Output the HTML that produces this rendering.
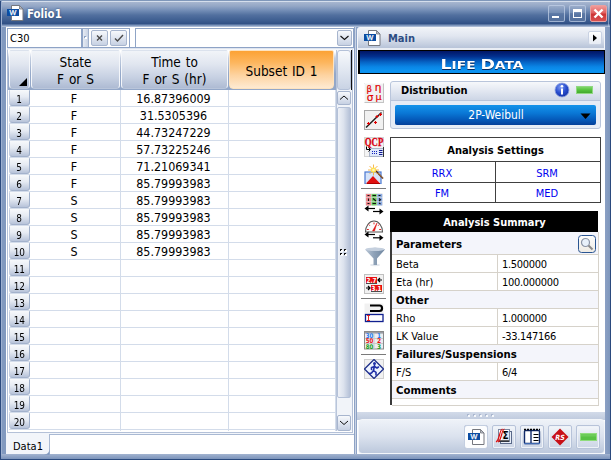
<!DOCTYPE html><html><head><meta charset="utf-8"><title>Folio1</title><style>
*{box-sizing:border-box;margin:0;padding:0}
html,body{width:611px;height:460px;overflow:hidden}
body{position:relative;background:#4b699a;font-family:"DejaVu Sans Condensed","Liberation Sans",sans-serif;font-size:11px;color:#000}
.abs{position:absolute}
#frame{left:0;top:0;width:611px;height:460px;background:#8199bf;}
#frameL{left:0;top:0;width:2px;height:460px;background:linear-gradient(90deg,#2b4a7e 0,#2b4a7e 1px,#9db0d0 1px,#9db0d0 2px)}
#frameR{left:605px;top:0;width:6px;height:460px;background:linear-gradient(90deg,#8ba0c4 0,#7f97bc 4.600px,#2b4a7e 4.800px,#2b4a7e 6px)}
#frameB{left:1px;top:454px;width:609px;height:6px;background:linear-gradient(#a3b4d0 0,#7e96bc 4.600px,#2b4a7e 4.800px,#2b4a7e 6px)}
#title{left:0;top:0;width:611px;height:27px;background:linear-gradient(#7f97ba 0,#7f97ba 1px,#d5deec 1px,#d5deec 2px,#a7b6d0 2px,#94a7c6 6px,#7690b8 10px,#52709f 15px,#3f5f92 20px,#2f4f84 24px,#2f4f84 24.300px,#7f97bd 24.700px,#7f97bd 25.700px,#a9b9d4 26.200px,#a9b9d4 27px)}
#ttext{left:27px;top:7px;font-weight:bold;font-size:11.400px;line-height:14px;color:#fff;letter-spacing:0;text-shadow:0 0 2px #274472}
.wbtn{top:5px;width:17px;height:17px;border:1px solid rgba(190,204,228,0.750);border-radius:2px;background:linear-gradient(rgba(255,255,255,0.060),rgba(255,255,255,0.120) 45%,rgba(255,255,255,0.020) 50%,rgba(255,255,255,0.140))}
#lpane{left:6px;top:27px;width:350px;height:427px;background:#fff}
#rpane{left:357px;top:27px;width:248px;height:427px;background:#fff}
.inp{background:#fff;border:1px solid #8fa4c6}
.hdr{top:50px;height:39px;border:1px solid #f4f6fa;border-top-color:#dbe2ed;border-bottom-color:#b9c5da;border-radius:2px 2px 4px 4px;background:linear-gradient(#f1f4f8 0,#e1e6f0 35%,#c6d0e2 72%,#aebbd3 100%);text-align:center;font-size:13.500px;word-spacing:1px;line-height:17.300px;padding-top:2px}
.rh{left:9px;width:21px;height:16px;border-right:1px solid #9eafca;border-bottom:1px solid #a3b2cc;border-left:1px solid #c3cde0;border-radius:1px 1px 3px 3px;background:linear-gradient(#f7f9fb 0,#e6ebf3 45%,#b7c3d9 100%);text-align:center;font-size:11px;line-height:13px;padding-top:3px}
.rh span{display:inline-block;transform:scaleX(0.900)}
.c{height:17px;font-size:12.400px;line-height:16px;text-align:center;padding-top:1px}
.hl{height:1px;background:#d3dcea;left:9px;width:326px}
.vl{width:1px;background:#d3dcea;top:90px;height:341px}
.sbtn{border:1px solid #a7b5ce;border-radius:2px;background:linear-gradient(#f7f9fc,#dfe5f0 50%,#c7d1e3)}
.ib{left:8px;width:20px;height:20px}
.b{font-weight:bold}
.srow{left:35px;width:206px;height:18px;border-bottom:1px solid #d6d2ca;font-size:11px;line-height:17px}
.sh{background:#f4f5fb;font-weight:bold;font-size:11px}
.bb{top:398px;width:24px;height:24px;border:1px solid #b7c3d9;border-radius:2px;background:linear-gradient(#f3f6fa,#dde4ef 50%,#ccd5e5);box-shadow:inset 0 0 0 1px #eef2f8}
</style></head><body>
<div id="frame" class="abs"></div><div id="title" class="abs"></div><div id="frameL" class="abs" style="top:1px;height:459px"></div><div id="frameR" class="abs" style="top:27px;height:433px"></div><div class="abs" style="left:610px;top:0;width:1px;height:27px;background:#2b4a7e"></div><div class="abs" style="left:608px;top:2px;width:1px;height:25px;background:rgba(190,205,230,0.55)"></div><div id="frameB" class="abs"></div>
<svg class="abs" style="left:6px;top:4px" width="19" height="18" viewBox="0 0 19 18"><path d="M5.500 1.500h8l3.500 3.500v11.500h-11.500z" fill="#fff" stroke="#74777e" stroke-width="1"/><path d="M13.500 1.500v3.500h3.500z" fill="#b9bcc4" stroke="#74777e" stroke-width="0.800"/><rect x="1" y="5" width="12" height="7" fill="#0c4da2"/><text x="7" y="11" font-size="7.200" fill="#fff" stroke="#fff" stroke-width="0.250" text-anchor="middle" font-family="Liberation Sans,sans-serif">W</text></svg>
<div id="ttext" class="abs">Folio1</div>
<div class="abs wbtn" style="left:548px"><div class="abs" style="left:3px;top:10px;width:7px;height:2px;background:#fff"></div></div>
<div class="abs wbtn" style="left:569px"><div class="abs" style="left:3px;top:3px;width:9px;height:9px;border:1px solid #fff;border-top-width:3px"></div></div>
<div class="abs wbtn" style="left:590px;border-color:#e8a0a0;background:linear-gradient(#f09a98,#e06060 45%,#cc3434 55%,#d85050)"><svg class="abs" style="left:1px;top:1px" width="13" height="13" viewBox="0 0 13 13"><path d="M2.500 2.500l8 8M10.500 2.500l-8 8" stroke="#fff" stroke-width="2.400"/></svg></div>
<div id="lpane" class="abs">
<div class="abs inp" style="left:1px;top:1px;width:75px;height:20px"></div>
<div class="abs" style="left:4px;top:5px;font-size:11px;line-height:13px">C30</div>
<div class="abs" style="left:76px;top:1px;width:48px;height:20px;border:1px solid #8fa4c6;background:#fff"></div>
<div class="abs" style="left:77px;top:2px;width:6px;height:18px;background:linear-gradient(90deg,#e6ebf3,#c9d3e4);border-right:1px solid #9fb0cc"></div><div class="abs" style="left:79px;top:10px;width:2px;height:2px;background:#fff;box-shadow:-1px -1px 0 #8ea3c6"></div>
<div class="abs sbtn" style="left:85px;top:3px;width:17px;height:16px"><svg width="15" height="14" viewBox="0 0 15 14"><path d="M5 4.500l5 5M10 4.500l-5 5" stroke="#4a4a4a" stroke-width="1.400"/></svg></div>
<div class="abs sbtn" style="left:104px;top:3px;width:17px;height:16px"><svg width="15" height="14" viewBox="0 0 15 14"><path d="M4 7.500l2.500 2.500l5.500-6" stroke="#4a4a4a" stroke-width="1.400" fill="none"/></svg></div>
<div class="abs inp" style="left:129px;top:1px;width:219px;height:20px"></div>
<div class="abs sbtn" style="left:331px;top:3px;width:15px;height:16px"><svg width="13" height="14" viewBox="0 0 13 14"><path d="M2.500 5l4 3.500l4-3.500" stroke="#111" stroke-width="1.100" fill="none"/></svg></div>
</div>
<div class="abs" style="left:7px;top:47px;width:347px;height:2px;background:linear-gradient(#8ea3c6,#8ea3c6 1.500px,#dfe5ef 1.500px)"></div>
<div class="abs" style="left:7px;top:49px;width:346px;height:384px;border:1px solid #b4c1d8;border-top-color:#f4f6fa;background:#fff"></div>
<div class="abs" style="left:8px;top:50px;width:328px;height:40px;background:linear-gradient(#fff 0,#fff 2px,#c3cee0 8px,#93a7c8 60%,#93a7c8)"></div>
<div class="abs hdr" style="left:9px;width:21px"><svg class="abs" style="left:9px;top:27px" width="8" height="8"><path d="M8 0v8h-8z" fill="#000"/></svg></div>
<div class="abs hdr" style="left:31px;width:89px"><div style="margin-top:1px">State</div><div>F or S</div></div>
<div class="abs hdr" style="left:121px;width:107px"><div style="margin-top:1px">Time to</div><div>F or S (hr)</div></div>
<div class="abs hdr" style="left:229px;width:105px;border-color:#fde3c0;background:linear-gradient(#fca234 0,#fdb55c 30%,#fdd3a0 65%,#feead2 100%);line-height:39px;padding-top:1px">Subset ID 1</div>
<div class="abs rh" style="top:90px"><span>1</span></div>
<div class="abs hl" style="top:106px"></div>
<div class="abs c" style="left:30px;top:90px;width:88px">F</div>
<div class="abs c" style="left:120px;top:90px;width:107px">16.87396009</div>
<div class="abs rh" style="top:107px"><span>2</span></div>
<div class="abs hl" style="top:123px"></div>
<div class="abs c" style="left:30px;top:107px;width:88px">F</div>
<div class="abs c" style="left:120px;top:107px;width:107px">31.5305396</div>
<div class="abs rh" style="top:124px"><span>3</span></div>
<div class="abs hl" style="top:140px"></div>
<div class="abs c" style="left:30px;top:124px;width:88px">F</div>
<div class="abs c" style="left:120px;top:124px;width:107px">44.73247229</div>
<div class="abs rh" style="top:141px"><span>4</span></div>
<div class="abs hl" style="top:157px"></div>
<div class="abs c" style="left:30px;top:141px;width:88px">F</div>
<div class="abs c" style="left:120px;top:141px;width:107px">57.73225246</div>
<div class="abs rh" style="top:158px"><span>5</span></div>
<div class="abs hl" style="top:174px"></div>
<div class="abs c" style="left:30px;top:158px;width:88px">F</div>
<div class="abs c" style="left:120px;top:158px;width:107px">71.21069341</div>
<div class="abs rh" style="top:175px"><span>6</span></div>
<div class="abs hl" style="top:191px"></div>
<div class="abs c" style="left:30px;top:175px;width:88px">F</div>
<div class="abs c" style="left:120px;top:175px;width:107px">85.79993983</div>
<div class="abs rh" style="top:192px"><span>7</span></div>
<div class="abs hl" style="top:208px"></div>
<div class="abs c" style="left:30px;top:192px;width:88px">S</div>
<div class="abs c" style="left:120px;top:192px;width:107px">85.79993983</div>
<div class="abs rh" style="top:209px"><span>8</span></div>
<div class="abs hl" style="top:225px"></div>
<div class="abs c" style="left:30px;top:209px;width:88px">S</div>
<div class="abs c" style="left:120px;top:209px;width:107px">85.79993983</div>
<div class="abs rh" style="top:226px"><span>9</span></div>
<div class="abs hl" style="top:242px"></div>
<div class="abs c" style="left:30px;top:226px;width:88px">S</div>
<div class="abs c" style="left:120px;top:226px;width:107px">85.79993983</div>
<div class="abs rh" style="top:243px"><span>10</span></div>
<div class="abs hl" style="top:259px"></div>
<div class="abs c" style="left:30px;top:243px;width:88px">S</div>
<div class="abs c" style="left:120px;top:243px;width:107px">85.79993983</div>
<div class="abs rh" style="top:260px"><span>11</span></div>
<div class="abs hl" style="top:276px"></div>
<div class="abs rh" style="top:277px"><span>12</span></div>
<div class="abs hl" style="top:293px"></div>
<div class="abs rh" style="top:294px"><span>13</span></div>
<div class="abs hl" style="top:310px"></div>
<div class="abs rh" style="top:311px"><span>14</span></div>
<div class="abs hl" style="top:327px"></div>
<div class="abs rh" style="top:328px"><span>15</span></div>
<div class="abs hl" style="top:344px"></div>
<div class="abs rh" style="top:345px"><span>16</span></div>
<div class="abs hl" style="top:361px"></div>
<div class="abs rh" style="top:362px"><span>17</span></div>
<div class="abs hl" style="top:378px"></div>
<div class="abs rh" style="top:379px"><span>18</span></div>
<div class="abs hl" style="top:395px"></div>
<div class="abs rh" style="top:396px"><span>19</span></div>
<div class="abs hl" style="top:412px"></div>
<div class="abs rh" style="top:413px"><span>20</span></div>
<div class="abs hl" style="top:429px"></div>
<div class="abs vl" style="left:120px"></div>
<div class="abs vl" style="left:228px"></div>
<div class="abs vl" style="left:335px"></div>
<div class="abs" style="left:336px;top:50px;width:16px;height:381px;background:#f1f4f9;border-left:1px solid #b9c5da"></div>
<div class="abs" style="left:337px;top:50px;width:14px;height:40px;border:1px solid #b4c1d8;border-radius:3px;background:linear-gradient(#f7f9fc,#e1e7f1 50%,#c9d3e4)"></div>
<div class="abs" style="left:351px;top:50px;width:1px;height:40px;background:#111"></div>
<div class="abs sbtn" style="left:337px;top:91px;width:14px;height:14px"><svg width="12" height="12" viewBox="0 0 12 12"><path d="M2 7.500l4-3.500l4 3.500" stroke="#111" stroke-width="1" fill="none"/></svg></div>
<div class="abs" style="left:337px;top:107px;width:14px;height:291px;border:1px solid #b4c1d8;border-radius:2px;background:linear-gradient(90deg,#eef1f7,#dde3ee 45%,#b4c0d7)"></div>
<div class="abs sbtn" style="left:337px;top:415px;width:14px;height:16px"><svg width="12" height="14" viewBox="0 0 12 14"><path d="M2 5l4 3.500l4-3.500" stroke="#111" stroke-width="1" fill="none"/></svg></div>
<svg class="abs" style="left:340px;top:249px" width="8" height="8"><path d="M0 0h2v1h-1v1h-1z" fill="#111"/><rect x="1" y="1" width="2" height="2" fill="#fff"/><path d="M0 0h2v1h-1v1h-1z" fill="#111"/><path d="M4 0h2v1h-1v1h-1z" fill="#111"/><rect x="5" y="1" width="2" height="2" fill="#fff"/><path d="M4 0h2v1h-1v1h-1z" fill="#111"/><path d="M0 4h2v1h-1v1h-1z" fill="#111"/><rect x="1" y="5" width="2" height="2" fill="#fff"/><path d="M0 4h2v1h-1v1h-1z" fill="#111"/><path d="M4 4h2v1h-1v1h-1z" fill="#111"/><rect x="5" y="5" width="2" height="2" fill="#fff"/><path d="M4 4h2v1h-1v1h-1z" fill="#111"/></svg>
<div class="abs" style="left:6px;top:433px;width:350px;height:21px;background:#f2f5fa"></div>
<div class="abs" style="left:49px;top:434px;width:307px;height:20px;background:#fff;border-top:1px solid #a9b9d3;border-left:1px solid #a9b9d3"></div>
<div class="abs" style="left:6px;top:433px;width:44px;height:21px;font-size:11px;line-height:14px;padding:7px 0 0 7px">Data1</div>
<svg class="abs" style="left:44px;top:448px" width="7" height="7"><path d="M0 6.500q5.500 0 5.500-6.500v7z" fill="#8199bf"/></svg>
<div class="abs" style="left:354px;top:27px;width:2px;height:427px;background:linear-gradient(90deg,#8da2c5 0,#8da2c5 1px,#c9d3e4 1px)"></div>
<div class="abs" style="left:356px;top:27px;width:1px;height:427px;background:#8ea3c6"></div>
<div id="rpane" class="abs">
<div class="abs" style="left:0;top:0;width:248px;height:23px;background:#8199bf"></div>
<div class="abs" style="left:0;top:0;width:248px;height:23px;border:1px solid #f4f6fa;border-bottom:2px solid #e9edf4;border-radius:3px 0 0 0;background:linear-gradient(#f0f3f8 0,#e1e6f0 40%,#c6d0e1 80%,#b7c3d8 100%)"></div>
<svg class="abs" style="left:6px;top:2px" width="19" height="18" viewBox="0 0 19 18"><path d="M5.500 1.500h8l3.500 3.500v11.500h-11.500z" fill="#fff" stroke="#74777e" stroke-width="1"/><path d="M13.500 1.500v3.500h3.500z" fill="#b9bcc4" stroke="#74777e" stroke-width="0.800"/><rect x="1" y="5" width="12" height="7" fill="#0c4da2"/><text x="7" y="11" font-size="7.200" fill="#fff" stroke="#fff" stroke-width="0.250" text-anchor="middle" font-family="Liberation Sans,sans-serif">W</text></svg>
<div class="abs b" style="left:31px;top:5px;font-size:11px;line-height:14px;color:#2c4c82">Main</div>
<div class="abs" style="left:231px;top:4px;width:14px;height:14px;border:1px solid #c9d2e3;border-radius:2px;background:linear-gradient(#fff,#e6ebf4)"><svg width="12" height="12"><path d="M4 2.500l4 3.500l-4 3.500z" fill="#000"/></svg></div>
<div class="abs" style="left:1px;top:23px;width:247px;height:24px;border:1px solid #000;border-width:1px 1px 1px 2px;background:linear-gradient(#011565 0,#02308f 25%,#0663c4 50%,#0a86e6 72%,#0c92f0 88%,#0c92f0 100%)"></div>
<svg class="abs" style="left:1px;top:23px" width="247" height="24"><text x="124" y="18.500" font-family="DejaVu Sans,Liberation Sans,sans-serif" font-weight="bold" fill="#fff" text-anchor="middle" textLength="83" lengthAdjust="spacingAndGlyphs" style="filter:drop-shadow(0.500px 1px 0.600px rgba(0,0,40,0.700))"><tspan font-size="13.600">L</tspan><tspan font-size="10.800">IFE </tspan><tspan font-size="13.600">D</tspan><tspan font-size="10.800">ATA</tspan></text></svg>
<div class="abs" style="left:33px;top:54px;width:211px;height:48px;border:1px solid #b9c5db;border-radius:3px;background:#e6ecf6"></div>
<div class="abs" style="left:34px;top:55px;width:209px;height:19px;border-radius:3px 3px 0 0;border-bottom:1px solid #b9c5db;background:linear-gradient(#f6f8fb 0,#e2e7f1 50%,#cdd6e6 100%)"></div>
<div class="abs b" style="left:44px;top:57px;font-size:11px;line-height:14px">Distribution</div>
<svg class="abs" style="left:197px;top:55px" width="16" height="16" viewBox="0 0 16 16"><defs><radialGradient id="ig" cx="0.4" cy="0.3" r="0.8"><stop offset="0" stop-color="#7f9cf0"/><stop offset="0.5" stop-color="#2a4fd0"/><stop offset="1" stop-color="#0d2a9a"/></radialGradient></defs><circle cx="8" cy="8" r="7" fill="url(#ig)" stroke="#8fa3e0" stroke-width="0.800"/><rect x="7" y="6.500" width="2" height="6" fill="#fff"/><circle cx="8" cy="4.300" r="1.300" fill="#fff"/></svg>
<div class="abs" style="left:219px;top:59px;width:17px;height:8px;background:linear-gradient(#7fd46a,#55c23c 50%,#43a82e);border:1px solid #8fd880"></div>
<div class="abs" style="left:38px;top:78px;width:201px;height:20px;border-radius:2px;background:linear-gradient(#1593ea 0,#0a78d6 40%,#0458b8 75%,#033f9a 100%);color:#fff;text-align:center;font-size:11.900px;line-height:21px;padding-left:1px">2P-Weibull</div>
<svg class="abs" style="left:223px;top:86px" width="11" height="7"><path d="M0.500 0.500h10l-5 5.500z" fill="#000"/></svg>
<div class="abs" style="left:33px;top:110px;width:211px;height:66px;border:1px solid #404040;background:#fff"></div>
<div class="abs" style="left:33px;top:134px;width:211px;height:1px;background:#404040"></div>
<div class="abs" style="left:33px;top:155px;width:211px;height:1px;background:#404040"></div>
<div class="abs" style="left:138px;top:134px;width:1px;height:42px;background:#404040"></div>
<div class="abs b" style="left:33px;top:117px;width:211px;text-align:center;font-size:11px;line-height:14px">Analysis Settings</div>
<div class="abs" style="left:33px;top:140px;width:104px;text-align:center;font-size:11px;line-height:14px;color:#0000f0">RRX</div>
<div class="abs" style="left:138px;top:140px;width:104px;text-align:center;font-size:11px;line-height:14px;color:#0000f0">SRM</div>
<div class="abs" style="left:33px;top:160px;width:104px;text-align:center;font-size:11px;line-height:14px;color:#0000f0">FM</div>
<div class="abs" style="left:138px;top:160px;width:104px;text-align:center;font-size:11px;line-height:14px;color:#0000f0">MED</div>
<div class="abs" style="left:33px;top:184px;width:2px;height:194px;background:#3a3a3a"></div>
<div class="abs b" style="left:33px;top:184px;width:208px;height:21px;padding-left:1px;background:#000;color:#fff;text-align:center;font-size:11px;line-height:24px;overflow:hidden">Analysis Summary</div>
<div class="abs srow sh" style="top:205px;height:23px;line-height:26px;padding-left:4px;font-size:11.300px;overflow:hidden">Parameters</div>
<div class="abs srow" style="top:228px;padding-left:4px;line-height:19px;overflow:hidden">Beta</div>
<div class="abs" style="left:140px;top:228px;width:1px;height:18px;background:#d6d2ca"></div>
<div class="abs" style="left:145px;top:228px;font-size:11px;line-height:19px;letter-spacing:-0.300px">1.500000</div>
<div class="abs srow" style="top:246px;padding-left:4px;line-height:19px;overflow:hidden">Eta (hr)</div>
<div class="abs" style="left:140px;top:246px;width:1px;height:18px;background:#d6d2ca"></div>
<div class="abs" style="left:145px;top:246px;font-size:11px;line-height:19px;letter-spacing:-0.300px">100.000000</div>
<div class="abs srow sh" style="top:264px;height:18px;line-height:19px;padding-left:4px;font-size:11.300px;overflow:hidden">Other</div>
<div class="abs srow" style="top:282px;padding-left:4px;line-height:19px;overflow:hidden">Rho</div>
<div class="abs" style="left:140px;top:282px;width:1px;height:18px;background:#d6d2ca"></div>
<div class="abs" style="left:145px;top:282px;font-size:11px;line-height:19px;letter-spacing:-0.300px">1.000000</div>
<div class="abs srow" style="top:300px;padding-left:4px;line-height:19px;overflow:hidden">LK Value</div>
<div class="abs" style="left:140px;top:300px;width:1px;height:18px;background:#d6d2ca"></div>
<div class="abs" style="left:145px;top:300px;font-size:11px;line-height:19px;letter-spacing:-0.300px">-33.147166</div>
<div class="abs srow sh" style="top:318px;height:18px;line-height:19px;padding-left:4px;font-size:11.300px;overflow:hidden">Failures/Suspensions</div>
<div class="abs srow" style="top:336px;padding-left:4px;line-height:19px;overflow:hidden">F/S</div>
<div class="abs" style="left:140px;top:336px;width:1px;height:18px;background:#d6d2ca"></div>
<div class="abs" style="left:145px;top:336px;font-size:11px;line-height:19px;letter-spacing:-0.300px">6/4</div>
<div class="abs srow sh" style="top:354px;height:18px;line-height:19px;padding-left:4px;font-size:11.300px;overflow:hidden">Comments</div>
<div class="abs" style="left:241px;top:205px;width:1px;height:174px;background:#d6d2ca"></div>
<div class="abs" style="left:35px;top:378px;width:207px;height:1px;background:#d6d2ca"></div>
<div class="abs" style="left:221px;top:208px;width:18px;height:18px;border:1.500px solid #2a5592;border-radius:3.500px;background:linear-gradient(#fdfdfc,#eeebe4)"><svg width="16" height="16" viewBox="0 0 16 16"><circle cx="6.500" cy="6.500" r="4" fill="#e8f1fb" stroke="#8a94a6" stroke-width="1.200"/><path d="M9.500 9.500l4 4" stroke="#8a8a8a" stroke-width="2"/></svg></div>
<div class="abs" style="left:0;top:385px;width:248px;height:8px;background:linear-gradient(#d3dbe9,#bfcadd)"></div>
<div class="abs" style="left:111px;top:388px;width:2px;height:2px;background:#f6f8fb;box-shadow:-1px -1px 0 #aab7cf"></div>
<div class="abs" style="left:117px;top:388px;width:2px;height:2px;background:#f6f8fb;box-shadow:-1px -1px 0 #aab7cf"></div>
<div class="abs" style="left:123px;top:388px;width:2px;height:2px;background:#f6f8fb;box-shadow:-1px -1px 0 #aab7cf"></div>
<div class="abs" style="left:129px;top:388px;width:2px;height:2px;background:#f6f8fb;box-shadow:-1px -1px 0 #aab7cf"></div>
<div class="abs" style="left:135px;top:388px;width:2px;height:2px;background:#f6f8fb;box-shadow:-1px -1px 0 #aab7cf"></div>
<div class="abs" style="left:1px;top:392px;width:247px;height:35px;border:1px solid #f3f6fa;border-radius:4px;background:linear-gradient(#eef2f8 0,#dbe2ee 50%,#bcc8dc 100%)"></div>
<div class="abs bb" style="left:107px"></div>
<div class="abs bb" style="left:135px"></div>
<div class="abs bb" style="left:163px"></div>
<div class="abs bb" style="left:191px"></div>
<div class="abs bb" style="left:219px"></div>
<svg class="abs" style="left:7px;top:56px" width="20" height="20" viewBox="0 0 20 20" font-family="DejaVu Sans Condensed,Liberation Sans,sans-serif"><rect x="0.500" y="0.500" width="19" height="19" fill="#f1f1f1" stroke="#c4c4c4"/><path d="M0.500 19.500v-19h19" fill="none" stroke="#fafafa"/><g font-family="DejaVu Sans,Liberation Sans,sans-serif" fill="#e00000" stroke="#e00000" stroke-width="0.200" text-anchor="middle"><text x="5.200" y="9" font-size="8.500">β</text><text x="14.100" y="8.200" font-size="10.500">η</text><text x="6" y="17.700" font-size="10.500">σ</text><text x="14.400" y="16.500" font-size="9.500">μ</text></g></svg>
<svg class="abs" style="left:7px;top:83px" width="20" height="20" viewBox="0 0 20 20" font-family="DejaVu Sans Condensed,Liberation Sans,sans-serif"><rect x="0.500" y="0.500" width="19" height="19" fill="#f1f1f1" stroke="#a8a8a8"/><path d="M2 17.500L17.500 2.500" stroke="#222" stroke-width="1.500"/><path d="M3 13.500h3M4.500 12v3M10 12.500h3M11.500 11v3M11.500 6.500h3M13 5v3M15 4.500h3M16.500 3v3" stroke="#e00000" stroke-width="1.100"/></svg>
<svg class="abs" style="left:7px;top:110px" width="20" height="20" viewBox="0 0 20 20" font-family="DejaVu Sans Condensed,Liberation Sans,sans-serif"><rect x="0.500" y="0.500" width="19" height="19" fill="#f4f4f4" stroke="#d4d4d4"/><text x="10" y="9.300" font-family="Liberation Serif,serif" font-size="11.500" font-weight="bold" fill="#d80010" stroke="#d80010" stroke-width="0.300" text-anchor="middle" textLength="18.500" lengthAdjust="spacingAndGlyphs">QCP</text><rect x="5.500" y="11.500" width="14" height="8" fill="#dfe8fa" stroke="#aab4c8"/><path d="M19.500 10v10" stroke="#333"/><path d="M2.500 9.500v3h3.500M4.500 10.500l2 2l-2 2" stroke="#000" stroke-width="1" fill="none"/><path d="M8 14.500h1M10 14.500h1M12 14.500h1M8 16.500h1M10 16.500h1M12 16.500h1" stroke="#1020c0" stroke-width="1"/><path d="M15 13.500h3.500M15 15.500h3.500M15 17.500h3.500" stroke="#101890" stroke-width="1"/></svg>
<svg class="abs" style="left:7px;top:137px" width="20" height="20" viewBox="0 0 20 20" font-family="DejaVu Sans Condensed,Liberation Sans,sans-serif"><rect x="1" y="8" width="16" height="12" fill="#d6e4fa" stroke="#4a78d0" stroke-width="1.200"/><path d="M2 19.500l7-7.500l7 7.500z" fill="#e01010"/><path d="M3 19.500h13" stroke="#b00000"/><path d="M11 6l8 8.500" stroke="#5a2a10" stroke-width="1.600"/><path d="M14 9l5 5.500" stroke="#caa070" stroke-width="0.600"/><path d="M9.500 0.500v11M4 6h11M5.500 2l8 8M13.500 2l-8 8" stroke="#f6b040" stroke-width="0.900"/><circle cx="9.500" cy="6" r="2.600" fill="#ffe24a"/><circle cx="9.500" cy="6" r="1.300" fill="#fff6c0"/></svg>
<div class="abs" style="left:4px;top:161px;width:25px;height:1px;background:#7a7a7a"></div>
<div class="abs" style="left:4px;top:271px;width:25px;height:1px;background:#7a7a7a"></div>
<div class="abs" style="left:4px;top:327px;width:25px;height:1px;background:#7a7a7a"></div>
<svg class="abs" style="left:7px;top:166px" width="20" height="23" viewBox="0 0 20 23" font-family="DejaVu Sans Condensed,Liberation Sans,sans-serif"><rect x="1.500" y="0.500" width="17" height="12" fill="#d8d8d8"/><rect x="2.0" y="1.0" width="5" height="3.400" fill="#f0868c"/><rect x="7.6" y="1.0" width="5" height="3.400" fill="#6cc860"/><rect x="13.2" y="1.0" width="5" height="3.400" fill="#8cace4"/><rect x="2.0" y="5.0" width="5" height="3.400" fill="#f0868c"/><rect x="7.6" y="5.0" width="5" height="3.400" fill="#6cc860"/><rect x="13.2" y="5.0" width="5" height="3.400" fill="#8cace4"/><rect x="2.0" y="9.0" width="5" height="3.400" fill="#f0868c"/><rect x="7.6" y="9.0" width="5" height="3.400" fill="#6cc860"/><rect x="13.2" y="9.0" width="5" height="3.400" fill="#8cace4"/><path d="M3.500 2.500h2M8.500 2.500h3.500M14.500 2.500h2M4.500 5.500v2.500M9 5.500l3 2.500M15 5.500l1.500 1.200l-1.500 1.300M3.500 10.500h2M8.500 10.500h3.500M15 10l1.500 1" stroke="#111" stroke-width="1.100" fill="none"/><path d="M2 15.5h9" stroke="#000" stroke-width="1.200"/><path d="M0.500 15.5l4-3v6z" fill="#000"/><path d="M9 18.5h9" stroke="#000" stroke-width="1.200"/><path d="M19.500 18.5l-4-3v6z" fill="#000"/></svg>
<svg class="abs" style="left:7px;top:192px" width="20" height="23" viewBox="0 0 20 23" font-family="DejaVu Sans Condensed,Liberation Sans,sans-serif"><path d="M1.500 13a8.500 11 0 0 1 17 0z" fill="#fcfcfc" stroke="#555" stroke-width="1.100"/><path d="M3 10.500h1.800M15.200 10.500H17M10 3.500v1.800M4.800 5.500l1 1.200M15.200 5.500l-1 1.200" stroke="#e02020" stroke-width="1"/><path d="M8.500 12l4.500-8l-2.500 8z" fill="#e01010" stroke="#e01010" stroke-width="0.500"/><path d="M2 15.5h9" stroke="#000" stroke-width="1.200"/><path d="M0.500 15.5l4-3v6z" fill="#000"/><path d="M9 18.8h9" stroke="#000" stroke-width="1.200"/><path d="M19.500 18.8l-4-3v6z" fill="#000"/></svg>
<svg class="abs" style="left:7px;top:219px" width="22" height="21" viewBox="0 0 22 21" font-family="DejaVu Sans Condensed,Liberation Sans,sans-serif"><defs><linearGradient id="fg" x1="0" x2="1"><stop offset="0" stop-color="#b9c6d6"/><stop offset="0.450" stop-color="#8fa2b8"/><stop offset="1" stop-color="#6f86a0"/></linearGradient></defs><ellipse cx="11" cy="19" rx="5" ry="1.200" fill="#e4e8ee"/><path d="M1 3.500q10-3.500 20 0l-8 9v6.500h-3.500v-6.500z" fill="url(#fg)"/><ellipse cx="11" cy="3.300" rx="9.500" ry="1.800" fill="#c5d0de"/></svg>
<svg class="abs" style="left:7px;top:247px" width="20" height="20" viewBox="0 0 20 20" font-family="DejaVu Sans Condensed,Liberation Sans,sans-serif"><rect x="0.500" y="0.500" width="19" height="19" fill="#f1f1f1" stroke="#c0c0c0"/><rect x="2" y="3" width="11" height="6" fill="#e81010"/><rect x="7" y="11" width="11" height="6" fill="#e81010"/><text x="7.500" y="8.500" font-size="7" font-weight="bold" fill="#fff" text-anchor="middle" textLength="10" lengthAdjust="spacingAndGlyphs">2.7</text><text x="12.500" y="16.500" font-size="7" font-weight="bold" fill="#fff" text-anchor="middle" textLength="10" lengthAdjust="spacingAndGlyphs">3.1</text><path d="M2 9.500h11M7 17.500h11" stroke="#222" stroke-width="0.800"/><path d="M18 6h-4M16 4l-2 2l2 2" stroke="#000" stroke-width="1.200" fill="none"/><path d="M2 14h4M4 12l2 2l-2 2" stroke="#000" stroke-width="1.200" fill="none"/></svg>
<svg class="abs" style="left:7px;top:276px" width="20" height="20" viewBox="0 0 20 20" font-family="DejaVu Sans Condensed,Liberation Sans,sans-serif"><rect x="0.500" y="0.500" width="19" height="19" fill="#f1f1f1" stroke="none"/><path d="M6 2.500h9.500q2.500 0 2.500 2.500v0.500q0 2.500-2.500 2.500h-9.500" fill="none" stroke="#000" stroke-width="2.200"/><rect x="1.500" y="11.500" width="17.500" height="7" fill="#fff" stroke="#102090" stroke-width="1.300"/><path d="M3 12.500h3M3 17.500h3M4.500 12.500v5" stroke="#e01010" stroke-width="0.900"/></svg>
<svg class="abs" style="left:7px;top:304px" width="20" height="19" viewBox="0 0 20 19" font-family="DejaVu Sans Condensed,Liberation Sans,sans-serif"><rect x="0.500" y="0.500" width="19" height="17.500" fill="#eceef2" stroke="#8a8a8a"/><rect x="1" y="1" width="18" height="1.600" fill="#9a9ca4"/><path d="M10 2.500v15.500M1 7.500h18M1 12.500h18" stroke="#c8c8c8"/><text x="5.500" y="7.2" font-size="6.500" font-weight="bold" fill="#1a7af0" text-anchor="middle" textLength="7.500" lengthAdjust="spacingAndGlyphs">30</text><text x="15" y="7.2" font-size="6.500" font-weight="bold" fill="#1a7af0" text-anchor="middle">1</text><text x="5.500" y="12.4" font-size="6.500" font-weight="bold" fill="#e81010" text-anchor="middle" textLength="7.500" lengthAdjust="spacingAndGlyphs">50</text><text x="15" y="12.4" font-size="6.500" font-weight="bold" fill="#e81010" text-anchor="middle">2</text><text x="5.500" y="17.6" font-size="6.500" font-weight="bold" fill="#18a018" text-anchor="middle" textLength="7.500" lengthAdjust="spacingAndGlyphs">80</text><text x="15" y="17.6" font-size="6.500" font-weight="bold" fill="#18a018" text-anchor="middle">3</text></svg>
<svg class="abs" style="left:7px;top:332px" width="20" height="20" viewBox="0 0 20 20" font-family="DejaVu Sans Condensed,Liberation Sans,sans-serif"><rect x="0.500" y="0.500" width="19" height="19" fill="#f1f1f1" stroke="#d0d0d0"/><path d="M10 0.500l9.500 9.500l-9.500 9.500l-9.500-9.500z" fill="#eef4ff" stroke="#20308a" stroke-width="1.300"/><circle cx="10.500" cy="4.600" r="1.500" fill="#2030a8"/><path d="M10.500 6.500l-1 5M9.500 11.500l2.500 2v2.500M9.500 11.500l-2 2.500l-2 0.500M10.500 7.500l-3 1v2M10.500 7.500l2.500 1.500l1.500-1" stroke="#2030a8" stroke-width="1.600" fill="none" stroke-linecap="round"/></svg>
<svg class="abs" style="left:107px;top:398px" width="24" height="24" viewBox="0 0 24 24" font-family="DejaVu Sans Condensed,Liberation Sans,sans-serif"><rect x="0.500" y="0.500" width="23" height="23" rx="2.500" fill="#fcfdfe" stroke="#c3cee0"/><g transform="translate(3,3)"><path d="M5.500 1.500h8l3.500 3.500v11.500h-11.500z" fill="#fff" stroke="#74777e" stroke-width="1"/><path d="M13.500 1.500v3.500h3.500z" fill="#b9bcc4" stroke="#74777e" stroke-width="0.800"/><rect x="1" y="5" width="12" height="7" fill="#0c4da2"/><text x="7" y="11" font-size="7.200" fill="#fff" stroke="#fff" stroke-width="0.250" text-anchor="middle" font-family="Liberation Sans,sans-serif">W</text></g></svg>
<svg class="abs" style="left:135px;top:398px" width="24" height="24" viewBox="0 0 24 24" font-family="DejaVu Sans Condensed,Liberation Sans,sans-serif"><rect x="8.500" y="6.500" width="11" height="12" fill="#e8eef8" stroke="#5a6a8a"/><rect x="6.500" y="4.500" width="11" height="12" fill="#fff" stroke="#7a86a0"/><rect x="10" y="6" width="7" height="9" fill="#dfe6f2"/><text x="13.500" y="14" font-size="10" font-weight="bold" fill="#000" text-anchor="middle">Σ</text><path d="M7 16h10" stroke="#000" stroke-width="1.200"/><path d="M4 17q2-1 3.500-7t3-6M6 17q2-1 3.500-7t3-6" stroke="#e01010" stroke-width="1.200" fill="none"/></svg>
<svg class="abs" style="left:163px;top:398px" width="24" height="24" viewBox="0 0 24 24" font-family="DejaVu Sans Condensed,Liberation Sans,sans-serif"><rect x="4.500" y="5.500" width="15" height="13" rx="1" fill="#fff" stroke="#102a6a" stroke-width="1.400"/><path d="M4 4.500h16" stroke="#000" stroke-width="1.400" stroke-dasharray="2 1"/><path d="M11 6v12" stroke="#102a6a" stroke-width="1.400"/><path d="M13.500 9.500h5M13.500 12.500h5M13.500 15.500h5" stroke="#000" stroke-width="1"/><path d="M4 18.700h16" stroke="#4a78c0" stroke-width="1"/></svg>
<svg class="abs" style="left:191px;top:398px" width="24" height="24" viewBox="0 0 24 24" font-family="DejaVu Sans Condensed,Liberation Sans,sans-serif"><path d="M12 3.500l8.500 8.500l-8.500 8.500l-8.500-8.500z" fill="#c81018"/><text x="12" y="14.600" font-size="7.200" font-weight="bold" font-style="italic" fill="#fff" text-anchor="middle" textLength="9.500" lengthAdjust="spacingAndGlyphs">RS</text></svg>
<svg class="abs" style="left:219px;top:398px" width="24" height="24" viewBox="0 0 24 24" font-family="DejaVu Sans Condensed,Liberation Sans,sans-serif"><rect x="4.500" y="8.500" width="16" height="7" fill="#58c244" stroke="#8fdc7c"/><rect x="5" y="9" width="15" height="2.500" fill="#6ccc58"/></svg>
</div>
</body></html>
